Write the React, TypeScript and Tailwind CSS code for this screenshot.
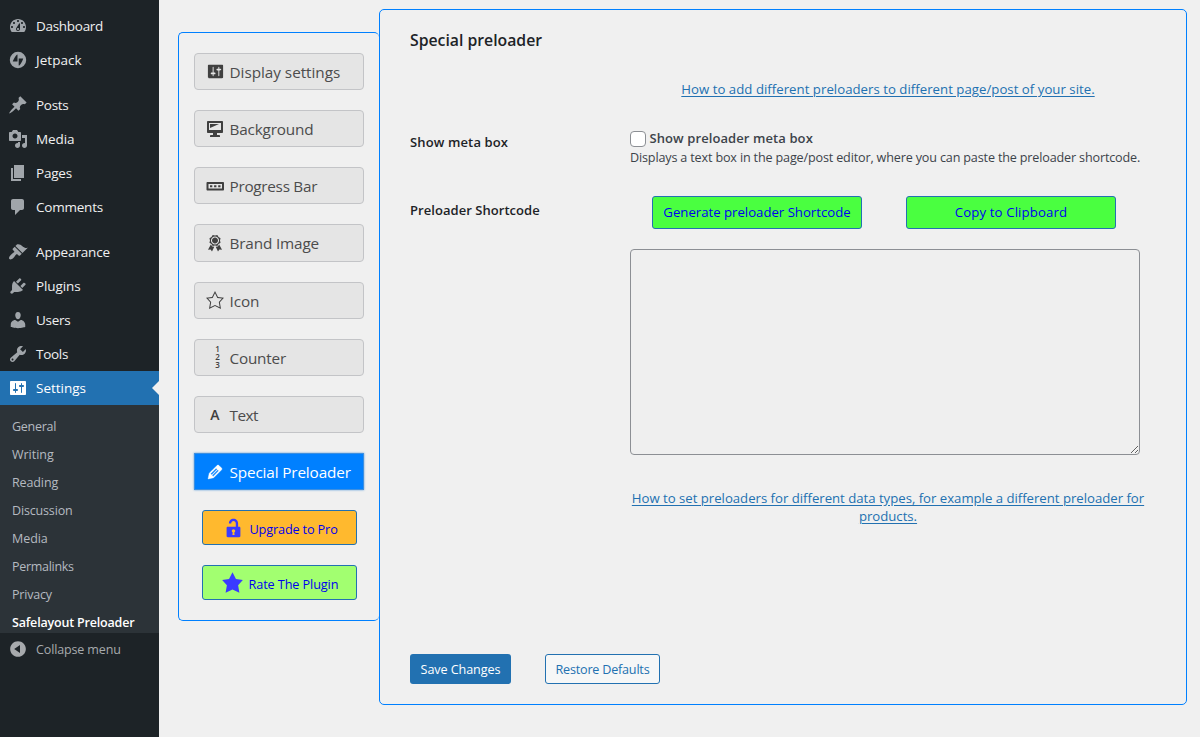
import type { ReactNode } from "react";

const FONT = "font-['Open_Sans','Noto_Sans',sans-serif]";

function Dash({ d, className }: { d: string; className?: string }) {
  return (
    <svg viewBox="0 0 20 20" fill="currentColor" className={className ?? "size-5"}>
      <path d={d} fillRule="evenodd" />
    </svg>
  );
}

const ICON = {
  dashboard:
    "M3.76 16h12.48c1.1-1.37 1.76-3.11 1.76-5 0-4.42-3.58-8-8-8s-8 3.58-8 8c0 1.89.66 3.63 1.76 5zM10 4c.55 0 1 .45 1 1s-.45 1-1 1-1-.45-1-1 .45-1 1-1zM6 6c.55 0 1 .45 1 1s-.45 1-1 1-1-.45-1-1 .45-1 1-1zm8 0c.55 0 1 .45 1 1s-.45 1-1 1-1-.45-1-1 .45-1 1-1zm-2.7 1.3c.5.15.8.5.7 1V13c0 1.1-.9 2-2 2s-2-.9-2-2c0-.57.24-1.08.63-1.45zM4 10c.55 0 1 .45 1 1s-.45 1-1 1-1-.45-1-1 .45-1 1-1zm12 0c.55 0 1 .45 1 1s-.45 1-1 1-1-.45-1-1 .45-1 1-1zm-5 3c0-.55-.45-1-1-1s-1 .45-1 1 .45 1 1 1 1-.45 1-1z",
  jetpack:
    "M10 1.8a8.2 8.2 0 1 0 0 16.4a8.2 8.2 0 1 0 0-16.4zM9.5 4.400v7.200H4.800c0-1 3.200-7.200 4.700-7.200zM10.700 15.600V8.400h4.500c0 1-3 7.200-4.500 7.200z",
  post: "M10.44 3.02l1.82-1.82 6.36 6.35-1.83 1.82c-1.05-.68-2.48-.57-3.41.36l-.75.75c-.92.93-1.04 2.35-.35 3.41l-1.83 1.82-2.41-2.41-2.8 2.79c-.42.42-3.38 2.71-3.8 2.29s1.86-3.39 2.28-3.81l2.79-2.79L4.1 9.36l1.83-1.82c1.05.69 2.48.57 3.4-.36l.75-.75c.93-.92 1.05-2.35.36-3.41z",
  media:
    "M13 11V4c0-.55-.45-1-1-1h-1.67L9 1H5L3.67 3H2c-.55 0-1 .45-1 1v7c0 .55.45 1 1 1h10c.55 0 1-.45 1-1zM7 4.5c1.38 0 2.5 1.12 2.5 2.5S8.38 9.5 7 9.5 4.5 8.38 4.5 7 5.62 4.5 7 4.5zM14 6h5v10.5c0 1.38-1.12 2.5-2.5 2.5S14 17.88 14 16.5s1.12-2.5 2.5-2.5c.17 0 .34.02.5.05V9h-3V6zm-4 8.05V13h2v3.5c0 1.38-1.12 2.5-2.5 2.5S7 17.88 7 16.5 8.12 14 9.5 14c.17 0 .34.02.5.05z",
  page: "M6 15V2h10v13H6zm-1 1h8v2H3V5h2v11z",
  comments: "M5 2h9c1.1 0 2 .9 2 2v7c0 1.1-.9 2-2 2h-2l-5 5v-5H5c-1.1 0-2-.9-2-2V4c0-1.1.9-2 2-2z",
  appearance:
    "M14.48 11.06L7.41 3.99l1.5-1.5c.5-.56 2.3-.47 3.51.32 1.21.8 1.43 1.28 2.91 2.1 1.18.64 2.45 1.26 4.45.85zm-.71.71L6.7 4.7 4.93 6.47c-.39.39-.39 1.02 0 1.41l1.06 1.06c.39.39.39 1.03 0 1.42-.6.6-1.43 1.11-2.21 1.69-.35.26-.7.53-1.01.84C1.43 14.23.4 16.08 1.4 17.07c.99 1 2.84-.03 4.18-1.36.31-.31.58-.66.85-1.02.57-.78 1.08-1.61 1.69-2.21.39-.39 1.02-.39 1.41 0l1.06 1.06c.39.39 1.02.39 1.41 0z",
  plugins:
    "M13.11 4.36L9.87 7.6 8 5.73l3.24-3.24c.35-.34 1.05-.2 1.56.32.52.51.66 1.21.31 1.55zm-8 1.77l.91-1.12 9.01 9.01-1.19.84c-.71.71-2.63 1.16-3.82 1.16H6.14L4.9 17.26c-.59.59-1.54.59-2.12 0-.59-.58-.59-1.53 0-2.12l1.24-1.24v-3.88c0-1.13.4-3.19 1.09-3.89zm7.26 3.97l3.24-3.24c.34-.35 1.04-.21 1.55.31.52.51.66 1.21.31 1.55l-3.24 3.25z",
  users:
    "M10 9.25c-2.27 0-2.73-3.44-2.73-3.44C7 4.02 7.82 2 9.97 2c2.16 0 2.98 2.02 2.71 3.81 0 0-.41 3.44-2.68 3.44zm0 2.57L12.72 10c2.39 0 4.52 2.33 4.52 4.53v2.49s-3.65 1.13-7.24 1.13c-3.65 0-7.24-1.13-7.24-1.13v-2.49c0-2.25 1.94-4.48 4.47-4.48z",
  tools:
    "M16.68 9.77c-1.34 1.34-3.3 1.67-4.95.99l-5.41 6.52c-.99.99-2.59.99-3.58 0s-.99-2.59 0-3.57l6.52-5.42c-.68-1.65-.35-3.61.99-4.95 1.28-1.28 3.12-1.62 4.72-1.06l-2.89 2.89 2.82 2.82 2.86-2.87c.53 1.58.18 3.39-1.08 4.65zM3.81 16.21c.4.39 1.04.39 1.43 0 .4-.4.4-1.04 0-1.43-.39-.4-1.03-.4-1.43 0-.39.39-.39 1.03 0 1.43z",
  settings:
    "M18 16V4c0-.55-.45-1-1-1H3c-.55 0-1 .45-1 1v12c0 .55.45 1 1 1h14c.55 0 1-.45 1-1zM8 11h1c.55 0 1 .45 1 1s-.45 1-1 1H8v1.5c0 .28-.22.5-.5.5s-.5-.22-.5-.5V13H6c-.55 0-1-.45-1-1s.45-1 1-1h1V5.5c0-.28.22-.5.5-.5s.5.22.5.5V11zm5-2h-1c-.55 0-1-.45-1-1s.45-1 1-1h1V5.5c0-.28.22-.5.5-.5s.5.22.5.5V7h1c.55 0 1 .45 1 1s-.45 1-1 1h-1v5.5c0 .28-.22.5-.5.5s-.5-.22-.5-.5V9z",
  collapse:
    "M10 2.16c4.33 0 7.84 3.51 7.84 7.84s-3.51 7.84-7.84 7.84S2.16 14.33 2.16 10 5.71 2.16 10 2.16zm2 11.72V6.12L6.18 9.97z",
  desktop:
    "M3 2h14c.55 0 1 .45 1 1v10c0 .55-.45 1-1 1h-5v2h2c.55 0 1 .45 1 1v1H5v-1c0-.55.45-1 1-1h2v-2H3c-.55 0-1-.45-1-1V3c0-.55.45-1 1-1zm13 9V4H4v7h12zM5 5h9L5 9V5z",
  progress:
    "M2.500 6h15.500c.55 0 1 .45 1 1v6.500c0 .55-.45 1-1 1H2.500c-.55 0-1-.45-1-1V7c0-.55.45-1 1-1zM3.500 8v4.500h13.500V8zM5 9.200h2.300v2H5zM9.100 9.200h2.300v2H9.100zM13.200 9.200h2.300v2h-2.300z",
  awards:
    "M4.460 5.160L5 7.460l-.54 2.290 2.010 1.240L7.700 13l2.300-.54 2.300.54 1.230-2.010 2.010-1.240L15 7.460l.54-2.300-2-1.240-1.240-2.010-2.300.55-2.290-.54-1.250 2zM10.010 11.500c-2.240 0-4.050-1.800-4.050-4.030 0-2.240 1.810-4.040 4.050-4.040s4.050 1.800 4.050 4.040c0 2.230-1.810 4.030-4.050 4.030zM10 4.460c-1.660 0-3 1.350-3 3s1.340 3 3 3 3-1.340 3-3-1.340-3-3-3zM5.800 11.500L3 16.800l2.600-.3L7 18.500l2.300-4.800-2-.1zM14.200 11.500l2.800 5.300-2.600-.3-1.400 2L10.700 13.700l2-.1z",
  starEmpty:
    "M10 1L7 7l-6 .75 4.130 4.620L4 19l6-3 6 3-1.120-6.630L19 7.750 13 7zm0 2.240l2.340 4.690 4.650.58-3.180 3.560.87 5.150L10 14.880l-4.680 2.340.87-5.150-3.180-3.560 4.650-.58z",
  edit: "M13.89 3.39l2.71 2.72c.46.46.42 1.24.03 1.64l-8.01 8.02-5.56 1.16 1.16-5.58s7.6-7.63 7.99-8.03c.39-.39 1.22-.39 1.68.07zm-2.73 2.79l-5.59 5.61 1.11 1.11 5.54-5.65zm-2.97 8.23l5.58-5.6-1.07-1.08-5.59 5.6z",
  unlock:
    "M12 9V6c0-1.1-.9-2-2-2s-2 .9-2 2H6c0-2.21 1.79-4 4-4s4 1.79 4 4v3h1c.55 0 1 .45 1 1v7c0 .55-.45 1-1 1H5c-.55 0-1-.45-1-1v-7c0-.55.45-1 1-1h7zm-1 7l-.36-2.15c.51-.24.86-.75.86-1.35 0-.83-.67-1.5-1.5-1.5s-1.5.67-1.5 1.5c0 .6.35 1.11.86 1.35L9 16h2z",
  star: "M10 1l3 6 6 .75-4.12 4.62L16 19l-6-3-6 3 1.13-6.63L1 7.75 7 7z",
};

const MENU: [string, string, string][][] = [
  [
    ["Dashboard", ICON.dashboard, "tracking-[-0.29px]"],
    ["Jetpack", ICON.jetpack, "tracking-[0.05px]"],
  ],
  [
    ["Posts", ICON.post, "tracking-[-0.3px]"],
    ["Media", ICON.media, "tracking-[-0.1px]"],
    ["Pages", ICON.page, "tracking-[-0.2px]"],
    ["Comments", ICON.comments, "tracking-[-0.22px]"],
  ],
  [
    ["Appearance", ICON.appearance, "tracking-[-0.15px]"],
    ["Plugins", ICON.plugins, "tracking-[-0.1px]"],
    ["Users", ICON.users, "tracking-[-0.3px]"],
    ["Tools", ICON.tools, "tracking-[-0.3px]"],
  ],
];

const SUBMENU: [string, string][] = [
  ["General", "tracking-[-0.28px]"],
  ["Writing", "tracking-[-0.03px]"],
  ["Reading", "tracking-[-0.12px]"],
  ["Discussion", "tracking-[-0.16px]"],
  ["Media", "tracking-[-0.05px]"],
  ["Permalinks", "tracking-[-0.3px]"],
  ["Privacy", "tracking-[-0.2px]"],
];

const Num = () => (
  <span className="flex w-5 flex-col items-center pl-[5px] text-[8px] leading-[8px] font-semibold">
    <span>1</span>
    <span>2</span>
    <span>3</span>
  </span>
);

const TABS: [string, ReactNode, string][] = [
  ["Display settings", <Dash key="i" d={ICON.settings} className="size-[19px]" />, "tracking-[-0.03px]"],
  ["Background", <Dash key="i" d={ICON.desktop} />, "tracking-[-0.17px]"],
  ["Progress Bar", <Dash key="i" d={ICON.progress} />, "tracking-[-0.28px]"],
  ["Brand Image", <Dash key="i" d={ICON.awards} />, "tracking-[-0.15px]"],
  ["Icon", <Dash key="i" d={ICON.starEmpty} />, "tracking-[-0.1px]"],
  ["Counter", <Num key="i" />, "tracking-[-0.2px]"],
  ["Text", <span key="i" className="text-[14px] font-semibold">A</span>, "tracking-[-0.5px]"],
];

function MenuItem({ label, icon, tracking }: { label: string; icon: string; tracking: string }) {
  return (
    <a className="flex h-[34px] items-center gap-2 pl-2 text-[#a0a5aa]">
      <Dash d={icon} />
      <span className={"text-[13.5px] text-[#f0f0f1] " + tracking}>{label}</span>
    </a>
  );
}

export default function App() {
  return (
    <div className={"flex h-[737px] w-[1200px] overflow-hidden bg-[#f0f0f0] " + FONT}>
      <nav className="flex w-[159px] shrink-0 flex-col bg-[#1d2327] pt-[9px]">
        {MENU.map((group, i) => (
          <div key={i} className={i < 2 ? "mb-[11px]" : ""}>
            {group.map(([l, d, t]) => (
              <MenuItem key={l} label={l} icon={d} tracking={t} />
            ))}
          </div>
        ))}
        <a className="flex h-[34px] items-center gap-2 bg-[#2271b1] pl-2 text-white">
          <Dash d={ICON.settings} className="size-5 shrink-0" />
          <span className="grow text-[13.5px] tracking-[-0.02px]">Settings</span>
          <svg viewBox="0 0 7 14" className="h-[14px] w-[7px] fill-[#f0f0f0]">
            <path d="M7 0L0 7l7 7z" />
          </svg>
        </a>
        <div className="h-[228px] bg-[#2c3338] pt-2 pl-3">
          {SUBMENU.map(([l, t]) => (
            <a key={l} className={"flex h-7 items-center text-[12.5px] text-[#b5bac0] " + t}>
              {l}
            </a>
          ))}
          <a className="flex h-7 items-center text-[12.5px] font-semibold tracking-[-0.18px] whitespace-nowrap text-white">
            Safelayout Preloader
          </a>
        </div>
        <a className="-mt-px flex h-[34px] items-center gap-2 pl-2 text-[#a7aaad]">
          <Dash d={ICON.collapse} />
          <span className="mt-[2px] text-[12.5px] tracking-[-0.13px]">Collapse menu</span>
        </a>
      </nav>

      <div className="mt-8 ml-[19px] flex h-[589px] w-[201px] shrink-0 flex-col gap-5 rounded-[5px] border border-r-0 border-[#0080ff] pt-5 pl-[15px]">
        {TABS.map(([l, icon, t]) => (
          <button
            key={l}
            className="flex h-[37.14px] w-[170px] shrink-0 items-center gap-1 rounded-[4px] border border-[#c3c4c7] bg-[#e5e5e5] pl-[10px] text-[#404040]"
          >
            <span className="flex w-5 shrink-0 items-center justify-center">{icon}</span>
            <span className={"mt-[2px] ml-[0.5px] text-[15.3px] whitespace-nowrap text-[#4c4c4c] " + t}>{l}</span>
          </button>
        ))}
        <button className="flex h-[37.14px] w-[170px] shrink-0 items-center gap-1 border border-[#3d8fe0] bg-[#0080ff] pl-[10px] text-white shadow-[0_0_2px_#5b9dd9]">
          <Dash d={ICON.edit} className="mt-px size-5 shrink-0 stroke-current stroke-[0.4]" />
          <span className="mt-[2px] ml-[0.5px] text-[15.3px] tracking-[-0.14px] whitespace-nowrap">Special Preloader</span>
        </button>
        <div className="flex flex-col gap-5 pl-2">
          <button className="flex h-[35px] w-[155px] items-center rounded-[3px] border border-[#2271b1] bg-[#ffb92e] pl-[19px] text-[#0000ee]">
            <Dash d={ICON.unlock} className="h-6 w-[23px] text-[#3a3aff]" />
            <span className="mt-[5px] ml-[4.5px] text-[12.7px] tracking-[-0.15px] whitespace-nowrap">Upgrade to Pro</span>
          </button>
          <button className="flex h-[35px] w-[155px] items-center rounded-[3px] border border-[#2271b1] bg-[#a2ff70] pl-[18px] text-[#0000ee]">
            <Dash d={ICON.star} className="size-[23px] text-[#3a3aff]" />
            <span className="mt-[5px] ml-[4.5px] text-[12.7px] tracking-[-0.11px] whitespace-nowrap">Rate The Plugin</span>
          </button>
        </div>
      </div>

      <main className="mt-[9px] h-[696px] w-[808px] shrink-0 rounded-[5px] border border-[#0080ff] pl-[30px]">
        <h2 className="mt-[19px] text-[15.8px] leading-[22px] font-semibold tracking-[-0.01px] text-[#1d2327]">
          Special preloader
        </h2>
        <div className="grid w-[736px] grid-cols-[220px_1fr]">
          <a className="col-start-2 mt-[27px] h-[22px] text-center text-[13.2px] leading-[22px] tracking-[0.03px] whitespace-nowrap text-[#2271b1] underline underline-offset-2">
            How to add different preloaders to different page/post of your site.
          </a>
          <div className="mt-[31px] h-[22px] text-[13px] leading-[22px] font-semibold tracking-[0.13px] text-[#1d2327]">
            Show meta box
          </div>
          <div className="mt-7">
            <label className="flex h-[21px] items-center gap-1 text-[13px] font-semibold tracking-[0.09px] text-[#3c434a]">
              <span className="mt-px size-4 rounded-[4px] border border-[#8c8f94] bg-white" />
              <span className="-ml-[0.5px]">Show preloader meta box</span>
            </label>
            <p className="h-[18px] text-[12.6px] leading-[18px] tracking-[-0.16px] whitespace-nowrap text-[#3c434a]">
              Displays a text box in the page/post editor, where you can paste the preloader shortcode.
            </p>
          </div>
          <div className="mt-[32px] h-[22px] text-[13px] leading-[22px] font-semibold tracking-[0.05px] text-[#1d2327]">
            Preloader Shortcode
          </div>
          <div className="mt-[29px]">
            <div className="flex gap-11 pl-[22px]">
              <button className="h-[33px] w-[210px] rounded-[3px] border border-[#2271b1] bg-[#4aff40] text-[13.2px] tracking-[-0.01px] whitespace-nowrap text-[#0000ee]">
                Generate preloader Shortcode
              </button>
              <button className="h-[33px] w-[210px] rounded-[3px] border border-[#2271b1] bg-[#4aff40] text-[13.2px] tracking-[0.12px] whitespace-nowrap text-[#0000ee]">
                Copy to Clipboard
              </button>
            </div>
            <textarea className="mt-5 block h-[206px] w-[510px] resize rounded-[4px] border border-[#8c8f94] bg-[#efefef]" />
          </div>
          <a className="col-start-2 mt-[34px] h-9 text-center text-[13.2px] leading-[18px] tracking-[-0.02px] whitespace-nowrap text-[#2271b1] underline underline-offset-2">
            How to set preloaders for different data types, for example a different preloader for
            <br />
            products.
          </a>
        </div>
        <div className="mt-[129px] flex gap-[34px]">
          <button className="h-[30px] w-[101px] rounded-[3px] bg-[#2271b1] pt-[2px] text-[12.6px] tracking-[-0.08px] whitespace-nowrap text-white">
            Save Changes
          </button>
          <button className="h-[30px] w-[115px] rounded-[3px] border border-[#2271b1] bg-[#f6f7f7] pt-[2px] text-[12.6px] tracking-[-0.21px] whitespace-nowrap text-[#2271b1]">
            Restore Defaults
          </button>
        </div>
      </main>
    </div>
  );
}
